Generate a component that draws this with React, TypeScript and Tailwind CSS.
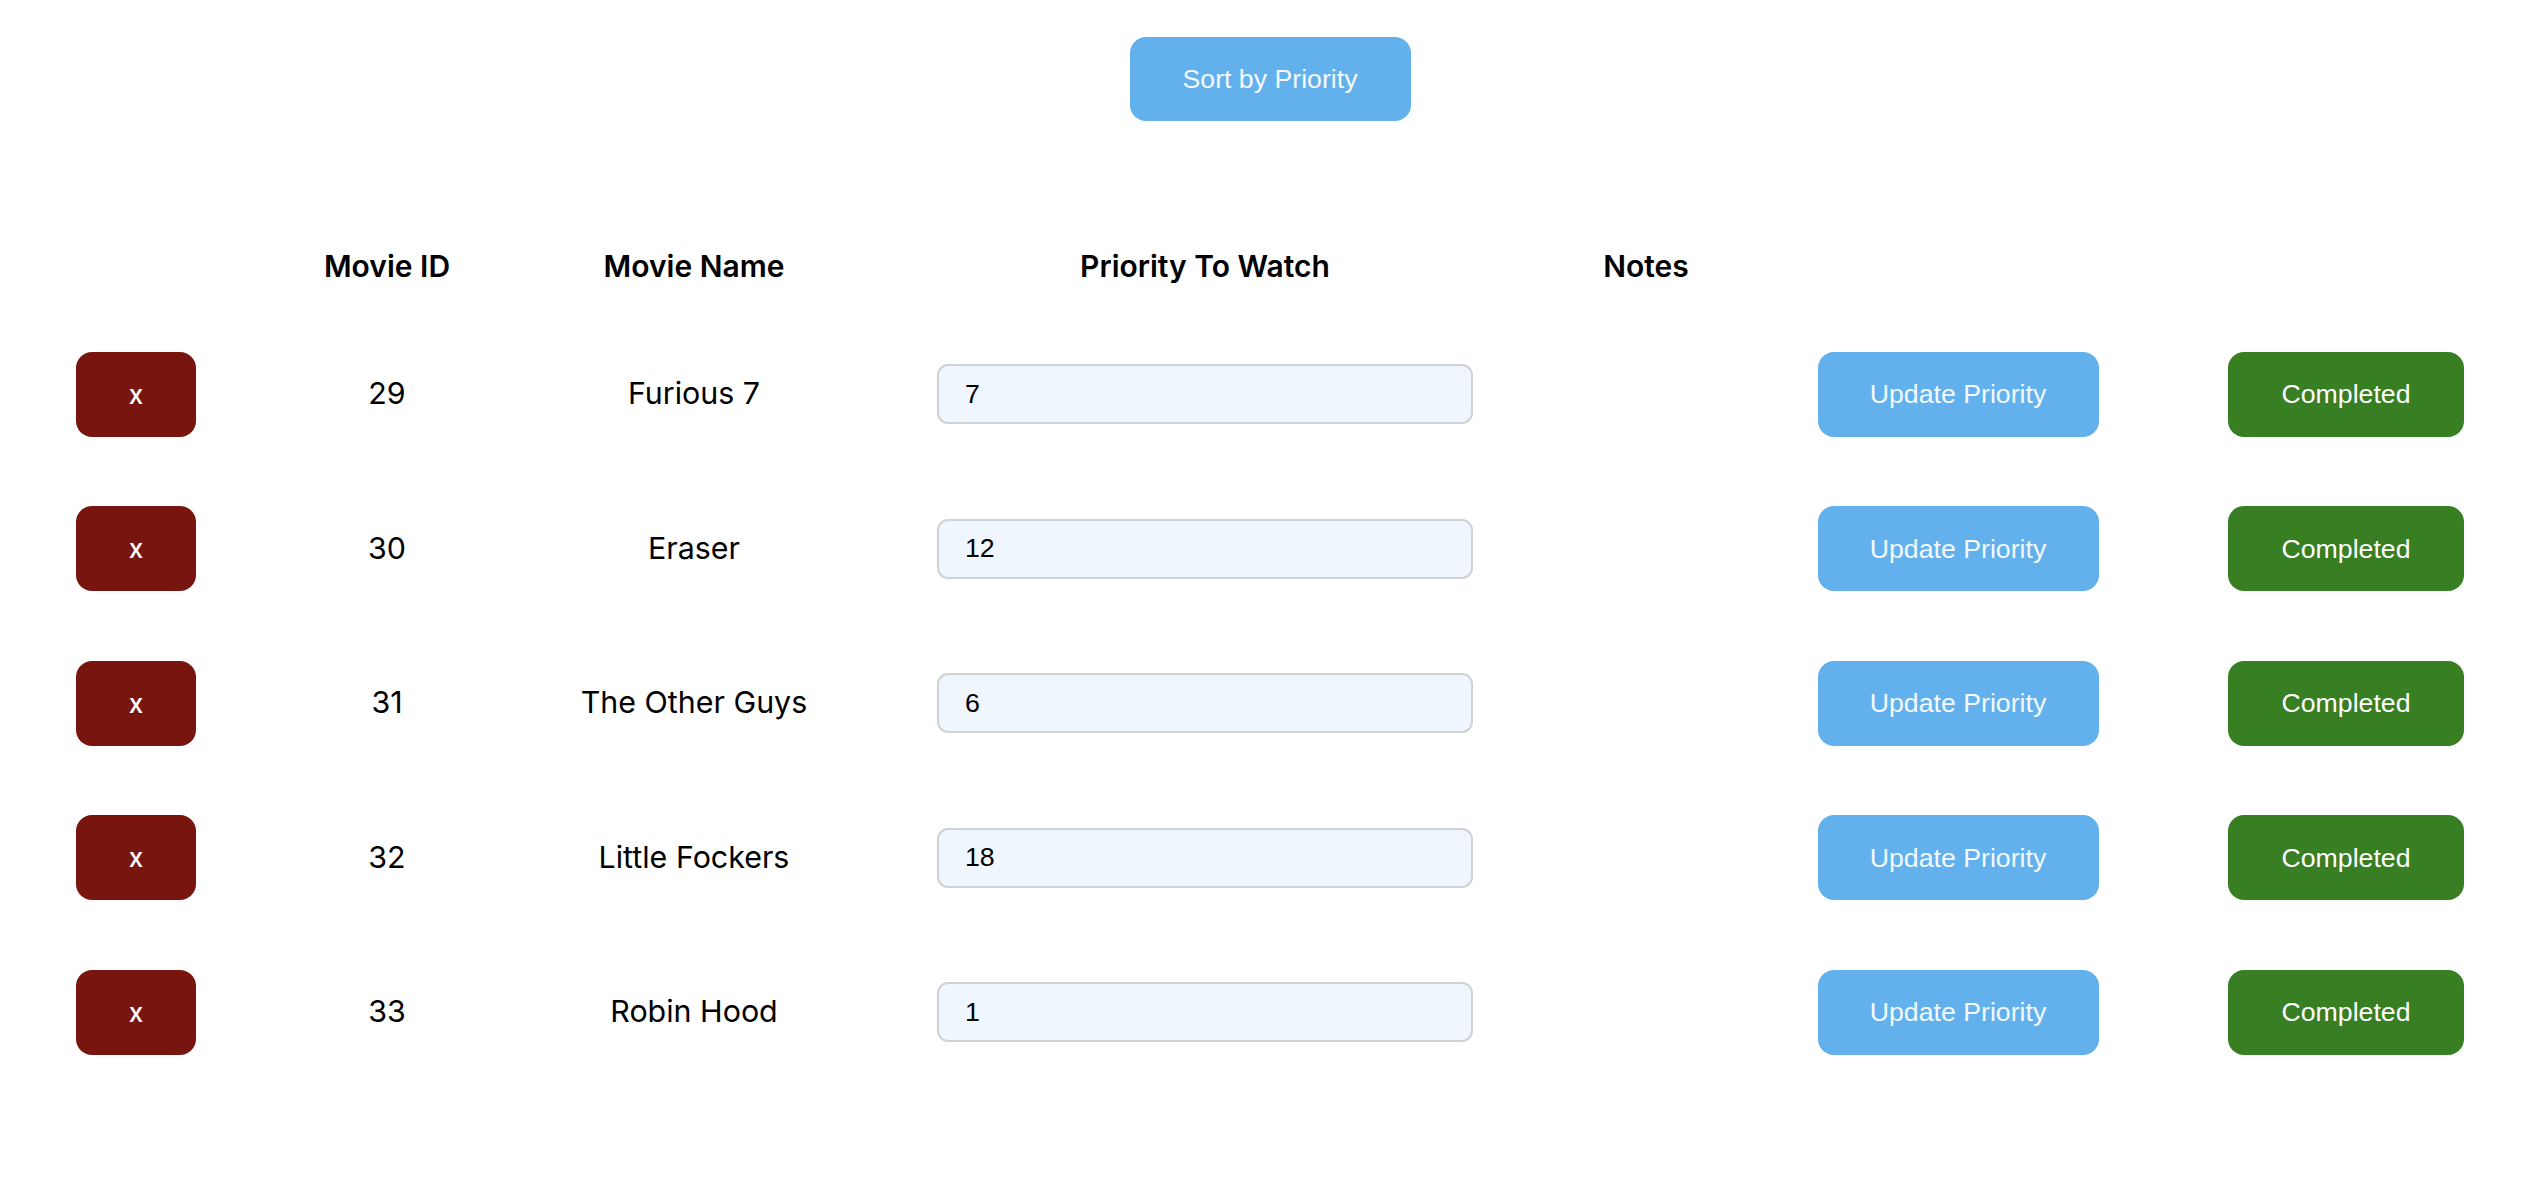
import React from "react"

const movies = [
  { id: 29, name: "Furious 7", priority: 7 },
  { id: 30, name: "Eraser", priority: 12 },
  { id: 31, name: "The Other Guys", priority: 6 },
  { id: 32, name: "Little Fockers", priority: 18 },
  { id: 33, name: "Robin Hood", priority: 1 },
]

const grid =
  "grid grid-cols-[272px_230px_384px_638px_228px_412px_366px] items-center justify-items-center"

export default function App() {
  return (
    <div className="w-[2530px] min-h-[1204px] bg-white font-['Inter',sans-serif] text-black">
      <div className="flex justify-center pt-[37px] pl-[10px]">
        <button className="h-[84px] w-[281px] rounded-[16px] bg-[#62b1ec] text-[26.7px] text-[#f3f9ff] font-['Liberation_Sans',Arial,sans-serif]">
          Sort by Priority
        </button>
      </div>

      <div className="mt-[94px]">
        <div className={`${grid} h-[102px] text-[30px] font-semibold`}>
          <div />
          <div>Movie ID</div>
          <div>Movie Name</div>
          <div>Priority To Watch</div>
          <div className="pl-4">Notes</div>
          <div />
          <div />
        </div>

        {movies.map((m) => (
          <div key={m.id} className={`${grid} h-[154.5px] text-[30.4px]`}>
            <button className="h-[85px] w-[120px] rounded-[16px] bg-[#79150f] text-[26px] font-medium text-white">
              x
            </button>
            <div>{m.id}</div>
            <div>{m.name}</div>
            <input
              defaultValue={m.priority}
              className="h-[60px] w-[536px] rounded-[11px] border-2 border-[#d0d2d4] bg-[#eff6fd] pl-[26px] text-[26.7px] text-black font-['Liberation_Sans',Arial,sans-serif] outline-none"
            />
            <div />
            <button className="h-[85px] w-[281px] rounded-[16px] bg-[#62b1ec] text-[26.7px] text-[#f3f9ff] font-['Liberation_Sans',Arial,sans-serif]">
              Update Priority
            </button>
            <button className="mr-[2px] h-[85px] w-[236px] rounded-[16px] bg-[#387e23] text-[26.7px] text-white font-['Liberation_Sans',Arial,sans-serif]">
              Completed
            </button>
          </div>
        ))}
      </div>
    </div>
  )
}
